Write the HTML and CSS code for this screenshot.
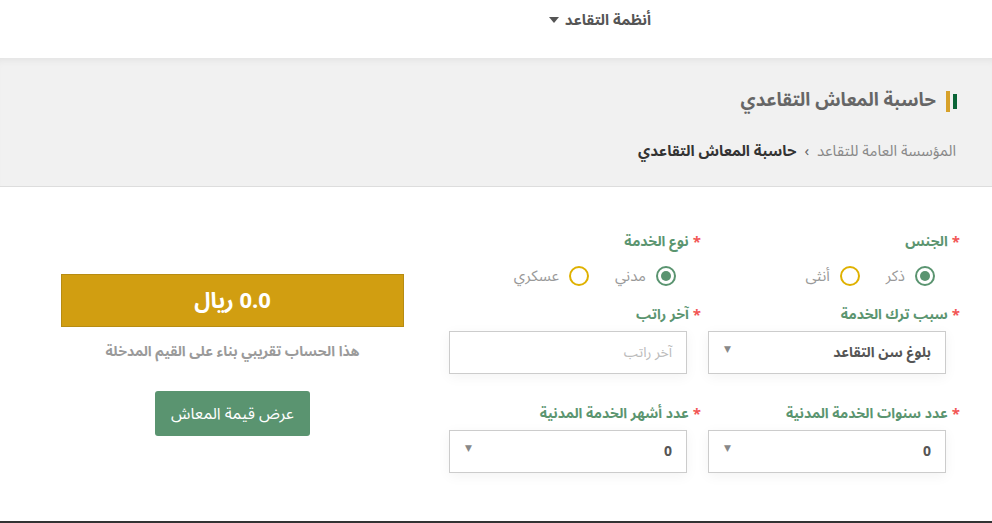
FILE: index.html
```html
<!DOCTYPE html>
<html lang="ar" dir="rtl">
<head>
<meta charset="utf-8">
<title>حاسبة المعاش التقاعدي</title>
<link rel="stylesheet" href="styles.css">
</head>
<body>
<header class="topbar">
  <nav class="nav">
    <a class="nav-item" href="#">أنظمة التقاعد <span class="caret"></span></a>
  </nav>
</header>

<section class="page-head">
  <h1 class="page-title"><span class="title-mark"><i class="mark-green"></i><i class="mark-gold"></i></span>حاسبة المعاش التقاعدي</h1>
  <ol class="breadcrumb">
    <li class="crumb">المؤسسة العامة للتقاعد</li>
    <li class="crumb-sep">›</li>
    <li class="crumb crumb-current">حاسبة المعاش التقاعدي</li>
  </ol>
</section>

<main class="calc">
  <form class="calc-form">
    <div class="field">
      <label class="field-label"><span class="req">*</span>الجنس</label>
      <div class="radios">
        <span class="radio"><span class="dot dot-on"></span>ذكر</span>
        <span class="radio"><span class="dot dot-off"></span>أنثى</span>
      </div>
    </div>
    <div class="field">
      <label class="field-label"><span class="req">*</span>نوع الخدمة</label>
      <div class="radios">
        <span class="radio"><span class="dot dot-on"></span>مدني</span>
        <span class="radio"><span class="dot dot-off"></span>عسكري</span>
      </div>
    </div>
    <div class="field">
      <label class="field-label"><span class="req">*</span>سبب ترك الخدمة</label>
      <div class="control select"><span class="value">بلوغ سن التقاعد</span><span class="arrow">▼</span></div>
    </div>
    <div class="field">
      <label class="field-label"><span class="req">*</span>آخر راتب</label>
      <div class="control input"><span class="placeholder">آخر راتب</span></div>
    </div>
    <div class="field">
      <label class="field-label"><span class="req">*</span>عدد سنوات الخدمة المدنية</label>
      <div class="control select"><span class="value">0</span><span class="arrow">▼</span></div>
    </div>
    <div class="field">
      <label class="field-label"><span class="req">*</span>عدد أشهر الخدمة المدنية</label>
      <div class="control select"><span class="value">0</span><span class="arrow">▼</span></div>
    </div>
  </form>

  <aside class="result">
    <div class="result-box">0.0 ريال</div>
    <p class="result-note">هذا الحساب تقريبي بناء على القيم المدخلة</p>
    <button class="result-btn" type="button">عرض قيمة المعاش</button>
  </aside>
</main>

<footer class="footer"></footer>
</body>
</html>
```

FILE: styles.css
```css
* { box-sizing: border-box; }

html, body {
  margin: 0;
  padding: 0;
  background: #fff;
}

body {
  direction: rtl;
  font-family: "Noto Sans Arabic", "DejaVu Sans", sans-serif;
  font-size: 14px;
  color: #555;
  overflow: hidden;
}

/* top bar */
.topbar {
  height: 58px;
  background: #fff;
}
.nav {
  display: flex;
  padding-right: 341px;
  padding-top: 10px;
}
.nav-item {
  display: flex;
  align-items: center;
  gap: 6px;
  font-size: 15px;
  font-weight: bold;
  color: #555;
  text-decoration: none;
  line-height: 20px;
}
.caret {
  width: 0;
  height: 0;
  border-left: 5px solid transparent;
  border-right: 5px solid transparent;
  border-top: 6px solid #555;
}

/* page head */
.page-head {
  height: 129px;
  background: #f1f1f1;
  border-bottom: 1px solid #ddd;
  box-shadow: inset 0 7px 8px -6px rgba(0,0,0,0.08);
  padding: 29px 35px 0 0;
}
.page-title {
  margin: 0;
  display: flex;
  align-items: center;
  gap: 10px;
  font-size: 18.5px;
  line-height: 28px;
  font-weight: bold;
  color: #666;
}
.title-mark {
  display: flex;
  align-items: center;
  gap: 3px;
}
.mark-gold {
  display: block;
  width: 4px;
  height: 21px;
  background: #d7a12a;
}
.mark-green {
  display: block;
  width: 4px;
  height: 15px;
  background: #0a6537;
}
.breadcrumb {
  list-style: none;
  margin: 26px 0 0 0;
  padding: 0;
  display: flex;
  align-items: center;
  gap: 8px;
  font-size: 15px;
  line-height: 20px;
  padding-right: 1px;
}
.crumb { color: #888; }
.crumb-sep { color: #666; font-size: 15px; }
.crumb-current { color: #333; font-weight: bold; }

/* calculator */
.calc {
  height: 334px;
  display: flex;
  align-items: flex-start;
  gap: 45px;
  padding-right: 32px;
}
.calc-form {
  display: grid;
  grid-template-columns: 252px 252px;
  column-gap: 7px;
  row-gap: 19px;
  padding-top: 45px;
}
.field-label {
  display: flex;
  align-items: center;
  gap: 4px;
  font-size: 14px;
  font-weight: bold;
  line-height: 20px;
  color: #5b9570;
}
.req {
  color: #f25656;
  font-size: 15px;
}
.radios {
  display: flex;
  align-items: center;
  gap: 26px;
  margin-top: 14px;
  padding-right: 25px;
  height: 20px;
}
.radio {
  display: flex;
  align-items: center;
  gap: 10px;
  color: #999;
  font-size: 15px;
}
.dot {
  width: 20px;
  height: 20px;
  border-radius: 50%;
  border: 2px solid;
  display: flex;
  align-items: center;
  justify-content: center;
}
.dot-on { border-color: #5a9470; }
.dot-on::after {
  content: "";
  width: 10px;
  height: 10px;
  border-radius: 50%;
  background: #5a9470;
}
.dot-off { border-color: #dfb100; }

.control {
  margin: 6px 14px 11px 0;
  height: 43px;
  border: 1px solid #ccc;
  background: #fff;
  box-shadow: 0 3px 12px rgba(0,0,0,0.05);
  display: flex;
  align-items: center;
  justify-content: space-between;
  padding: 0 14px 0 15px;
}
.value {
  color: #555;
  font-weight: bold;
  font-size: 14px;
}
.arrow {
  color: #888;
  font-size: 9px;
  margin-top: -6px;
}
.placeholder {
  color: #bbb;
  font-size: 14px;
  padding-right: 0;
}

/* result */
.result {
  width: 343px;
  margin-top: 87px;
  display: flex;
  flex-direction: column;
  align-items: center;
}
.result-box {
  width: 100%;
  height: 53px;
  background: #d19e11;
  border: 1px solid #b78c12;
  color: #fff;
  font-size: 22px;
  font-weight: bold;
  display: flex;
  align-items: center;
  justify-content: center;
}
.result-note {
  margin: 15px 0 0 0;
  color: #9a9a9a;
  font-size: 14px;
  font-weight: bold;
  line-height: 20px;
}
.result-btn {
  margin-top: 29px;
  width: 155px;
  height: 45px;
  border: none;
  border-radius: 3px;
  background: #5a9470;
  color: #fff;
  font-family: inherit;
  font-size: 16px;
}

.footer {
  border-top: 2px solid #333;
  height: 10px;
}
```
